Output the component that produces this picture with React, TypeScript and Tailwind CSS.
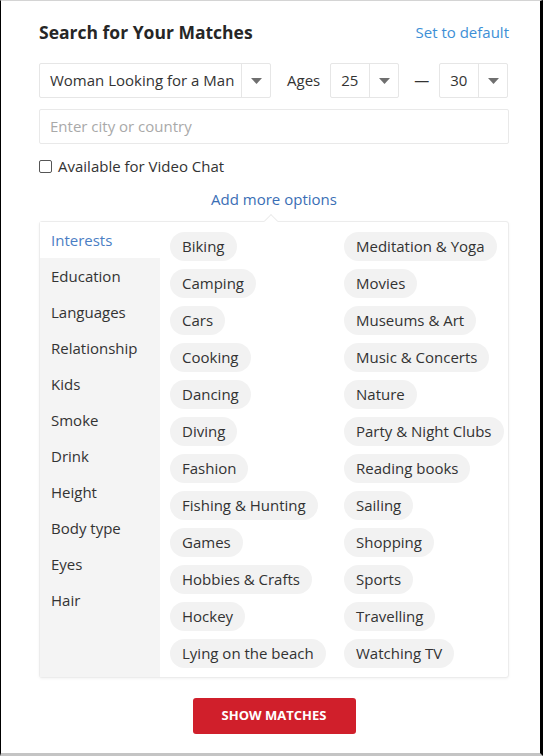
import React from "react";

const col1 = [
  "Biking",
  "Camping",
  "Cars",
  "Cooking",
  "Dancing",
  "Diving",
  "Fashion",
  "Fishing & Hunting",
  "Games",
  "Hobbies & Crafts",
  "Hockey",
  "Lying on the beach",
];
const col2 = [
  "Meditation & Yoga",
  "Movies",
  "Museums & Art",
  "Music & Concerts",
  "Nature",
  "Party & Night Clubs",
  "Reading books",
  "Sailing",
  "Shopping",
  "Sports",
  "Travelling",
  "Watching TV",
];
const side = [
  "Interests",
  "Education",
  "Languages",
  "Relationship",
  "Kids",
  "Smoke",
  "Drink",
  "Height",
  "Body type",
  "Eyes",
  "Hair",
];

function Caret() {
  return (
    <svg width="11" height="6" viewBox="0 0 11 6">
      <path d="M0 0 H11 L5.5 6 Z" fill="#6f6f6f" />
    </svg>
  );
}

function Select({ value, w, textW }: { value: string; w: string; textW: string }) {
  return (
    <div className={`flex h-[35px] ${w} items-stretch rounded-[2px] border border-[#e6e6e6] bg-white`}>
      <div className={`flex ${textW} items-center pl-[10px] text-[15px] text-[#333]`}>{value}</div>
      <div className="flex flex-1 items-center justify-center border-l border-[#e6e6e6]">
        <Caret />
      </div>
    </div>
  );
}

function Chip({ label }: { label: string }) {
  return (
    <div className="flex h-[29px] items-center self-start rounded-full bg-[#f2f2f2] px-[12px] text-[15px] leading-none text-[#333]">
      {label}
    </div>
  );
}

export default function App() {
  return (
    <div
      className="flex h-[756px] w-[543px] flex-col border-t border-b-[3px] border-l border-r-[3px] border-t-[#d4d4d4] border-b-[#c4c4c4] border-l-black border-r-black bg-white"
      style={{ fontFamily: '"Open Sans", "Noto Sans", sans-serif' }}
    >
      <div className="ml-[38px] flex w-[470px] flex-col">
        {/* title */}
        <div className="mt-[19px] flex h-[24px] items-center justify-between">
          <div className="text-[17.5px] font-bold text-[#262626]">Search for Your Matches</div>
          <div className="text-[15px] text-[#3d8fd6]">Set to default</div>
        </div>

        {/* selects */}
        <div className="mt-[19px] flex items-center">
          <Select value="Woman Looking for a Man" w="w-[232px]" textW="w-[201px]" />
          <div className="ml-[16px] text-[15px] text-[#333]">Ages</div>
          <div className="ml-[10px]">
            <Select value="25" w="w-[69px]" textW="w-[38px]" />
          </div>
          <div className="ml-[15px] w-[15px] text-center text-[15px] text-[#333]">—</div>
          <div className="ml-[10px]">
            <Select value="30" w="w-[69px]" textW="w-[38px]" />
          </div>
        </div>

        {/* location */}
        <div className="mt-[11px] flex h-[35px] items-center rounded-[2px] border border-[#e9e9e9] px-[10px] text-[15px] text-[#a9a9a9]">
          Enter city or country
        </div>

        {/* checkbox */}
        <div className="mt-[12px] flex h-[20px] items-center">
          <div className="h-[13px] w-[13px] rounded-[2px] border border-[#555] bg-white" />
          <div className="ml-[6px] text-[15px] text-[#333]">Available for Video Chat</div>
        </div>

        {/* add more options */}
        <div className="mt-[11px] flex h-[24px] items-center justify-center text-[15px] text-[#3a6eb5]">
          Add more options
        </div>

        {/* panel */}
        <div className="relative mt-[10px] flex h-[457px] rounded-[3px] border border-[#ececec] bg-white shadow-[0_1px_3px_rgba(0,0,0,0.05)]">
          <div className="absolute left-[226px] top-[-6px] h-[10px] w-[10px] rotate-45 border-l border-t border-[#ececec] bg-white" />
          <div className="flex w-[120px] flex-col bg-[#f4f4f4]">
            {side.map((s, i) => (
              <div
                key={s}
                className={`flex h-[36px] items-center pl-[11px] text-[15px] ${
                  i === 0 ? "bg-white text-[#4a7ec4]" : "text-[#333]"
                }`}
              >
                {s}
              </div>
            ))}
          </div>
          <div className="ml-[10px] mt-[10px] flex">
            <div className="flex w-[174px] flex-col gap-[8px]">
              {col1.map((c) => (
                <Chip key={c} label={c} />
              ))}
            </div>
            <div className="flex flex-col gap-[8px]">
              {col2.map((c) => (
                <Chip key={c} label={c} />
              ))}
            </div>
          </div>
        </div>

        {/* button */}
        <div className="mt-[20px] flex justify-center">
          <div className="flex h-[36px] w-[163px] items-center justify-center rounded-[3px] bg-[#d01f2b] text-[13px] font-bold text-white">
            SHOW MATCHES
          </div>
        </div>
      </div>
    </div>
  );
}
